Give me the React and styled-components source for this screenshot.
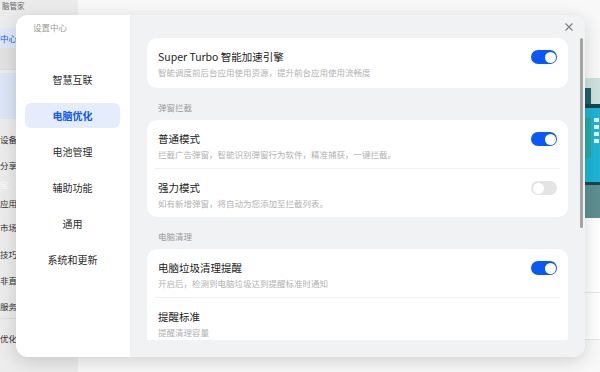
import React from "react";
import styled, { createGlobalStyle } from "styled-components";

const GlobalStyle = createGlobalStyle`
  html, body {
    margin: 0;
    padding: 0;
    background: #f8f8f8;
  }
  body {
    font-family: "Noto Sans CJK SC", "Noto Sans", sans-serif;
  }
  * {
    box-sizing: border-box;
  }
`;

const Page = styled.div`
  position: relative;
  width: 600px;
  height: 372px;
  overflow: hidden;
  display: flex;
  background: #f8f8f8;
`;

/* ---------- app behind the dialog ---------- */

const AppSidebar = styled.div`
  width: 78px;
  height: 100%;
  background: #ececec;
  display: flex;
  flex-direction: column;
  font-size: 8.5px;
  color: #333;
`;

const AppBrand = styled.div`
  height: 28px;
  padding-top: 1px;
  line-height: 9px;
  font-size: 7.5px;
  color: #666;
  padding-left: 2px;
`;

const AppNavItem = styled.div`
  height: ${p => p.h || 26}px;
  display: flex;
  align-items: center;
  white-space: nowrap;
  color: ${p => (p.faint ? "#fafafa" : p.active ? "#1a5ff0" : "#333")};
  background: ${p => (p.active ? "#dfe8fa" : p.shade ? "#e2e2e2" : "transparent")};
  border-bottom: ${p => (p.divider ? "1px solid #dcdcdc" : "none")};
`;

const AppBanner = styled.div`
  height: 46px;
  margin: 3px 0 6px;
  background: #dde6f6;
`;

const AppMain = styled.div`
  flex: 1;
  display: grid;
  grid-template-columns: 507px 1fr;
`;

const AppRight = styled.div`
  padding-top: 78px;
  display: flex;
  flex-direction: column;
`;

const Promo = styled.div`
  height: 140px;
  background: #cfe3de;
  svg {
    display: block;
  }
`;

const AppRow = styled.div`
  height: ${p => p.h}px;
  background: #fff;
  border-bottom: 1px solid #e6e6e6;
`;

/* ---------- dialog ---------- */

const Dialog = styled.div`
  position: absolute;
  left: 16px;
  top: 15px;
  width: 569px;
  height: 342px;
  border-radius: 12px;
  overflow: hidden;
  display: flex;
  box-shadow: 0 4px 18px rgba(0, 0, 0, 0.16);
`;

const Nav = styled.div`
  width: 114px;
  background: #fff;
  display: flex;
  flex-direction: column;
`;

const NavTitle = styled.div`
  padding: 6px 0 0 17px;
  line-height: 12px;
  font-size: 8.5px;
  color: #9a9a9a;
`;

const NavList = styled.div`
  margin-top: 34px;
  display: flex;
  flex-direction: column;
  gap: 11px;
  padding: 0 10px 0 9px;
`;

const NavItem = styled.div`
  height: 25px;
  border-radius: 6px;
  display: flex;
  align-items: center;
  justify-content: center;
  font-size: 10px;
  font-weight: ${p => (p.active ? 700 : 400)};
  color: ${p => (p.active ? "#0a59f7" : "#2b2b2b")};
  background: ${p => (p.active ? "#e5edfd" : "transparent")};
`;

const Content = styled.div`
  position: relative;
  flex: 1;
  background: #f1f2f4;
  padding-bottom: 17px;
`;

const Scroller = styled.div`
  height: 325px;
  overflow: hidden;
  padding: 23px 17px 0;
`;

const CloseButton = styled.button`
  position: absolute;
  top: 7px;
  right: 11px;
  width: 10px;
  height: 10px;
  padding: 0;
  border: none;
  background: none;
  display: flex;
  svg {
    display: block;
  }
`;

const ScrollThumb = styled.div`
  position: absolute;
  right: 2px;
  top: 23px;
  width: 3px;
  height: 190px;
  border-radius: 2px;
  background: #a3a3a3;
`;

const Card = styled.div`
  background: #fff;
  border-radius: 10px;
  padding: 0 11px;
`;

const Row = styled.div`
  height: ${p => p.h || 48}px;
  padding-top: 12px;
  display: flex;
  align-items: flex-start;
  justify-content: space-between;
`;

const RowText = styled.div`
  display: flex;
  flex-direction: column;
  gap: 2px;
`;

const RowTitle = styled.div`
  font-size: 10.5px;
  line-height: 14px;
  color: #222;
  white-space: nowrap;
`;

const RowDesc = styled.div`
  font-size: 8.5px;
  line-height: 12px;
  color: #b2b2b2;
  white-space: nowrap;
`;

const Divider = styled.div`
  height: 1px;
  margin: 0 -3px;
  background: #efefef;
`;

const SectionLabel = styled.div`
  height: 32px;
  padding: 13px 0 0 11px;
  line-height: 12px;
  font-size: 8.5px;
  color: #9c9c9c;
`;

const Track = styled.div`
  width: 26px;
  height: 14px;
  border-radius: 7px;
  padding: 1.5px;
  display: flex;
  justify-content: ${p => (p.on ? "flex-end" : "flex-start")};
  background: ${p => (p.on ? "#0a59f7" : "#e4e4e4")};
  flex-shrink: 0;
`;

const Knob = styled.div`
  width: 11px;
  height: 11px;
  border-radius: 50%;
  background: #fff;
`;

const Toggle = ({ on }) => (
  <Track on={on ? 1 : 0}>
    <Knob />
  </Track>
);

const SettingRow = ({ title, desc, on, h }) => (
  <Row h={h}>
    <RowText>
      <RowTitle>{title}</RowTitle>
      <RowDesc>{desc}</RowDesc>
    </RowText>
    {on !== undefined && <Toggle on={on} />}
  </Row>
);

const navItems = ["智慧互联", "电脑优化", "电池管理", "辅助功能", "通用", "系统和更新"];

const PromoArt = () => (
  <svg width="15" height="140" viewBox="0 0 15 140">
    <rect x="0" y="0" width="15" height="140" fill="#cde2dc" />
    <rect x="0" y="10" width="6" height="18" fill="#1f5f66" />
    <rect x="0" y="26" width="15" height="4" fill="#16474d" />
    <rect x="0" y="30" width="15" height="76" fill="#1fb3d6" />
    <rect x="0" y="40" width="6" height="40" fill="#2aa7a0" />
    <rect x="9" y="40" width="5" height="4" fill="#e8f3fb" />
    <rect x="9" y="47" width="5" height="4" fill="#e8f3fb" />
    <rect x="9" y="54" width="5" height="4" fill="#e8f3fb" />
    <rect x="9" y="61" width="5" height="4" fill="#e8f3fb" />
    <rect x="0" y="104" width="15" height="3" fill="#16474d" />
    <rect x="0" y="107" width="15" height="33" fill="#5f8f90" />
  </svg>
);

const App = () => (
  <>
    <GlobalStyle />
    <Page>
      <AppSidebar>
        <AppBrand>脑管家</AppBrand>
        <AppNavItem h={20} active>
          中心 〉
        </AppNavItem>
        <AppNavItem h={22} shade divider />
        <AppBanner />
        <AppNavItem h={28}>设备</AppNavItem>
        <AppNavItem h={24}>分享</AppNavItem>
        <AppNavItem h={14} faint>
          宝.
        </AppNavItem>
        <AppNavItem h={24}>应用</AppNavItem>
        <AppNavItem h={24}>市场</AppNavItem>
        <AppNavItem h={2} />
        <AppNavItem h={26}>技巧</AppNavItem>
        <AppNavItem h={26}>非直</AppNavItem>
        <AppNavItem h={26} divider>
          服务
        </AppNavItem>
        <AppNavItem h={38}>优化</AppNavItem>
      </AppSidebar>
      <AppMain>
        <div />
        <AppRight>
          <Promo>
            <PromoArt />
          </Promo>
          <AppRow h={75} />
          <AppRow h={47} />
        </AppRight>
      </AppMain>

      <Dialog>
        <Nav>
          <NavTitle>设置中心</NavTitle>
          <NavList>
            {navItems.map(item => (
              <NavItem key={item} active={item === "电脑优化" ? 1 : 0}>
                {item}
              </NavItem>
            ))}
          </NavList>
        </Nav>
        <Content>
          <CloseButton aria-label="关闭">
            <svg width="10" height="10" viewBox="0 0 10 10">
              <path d="M1.5 1.5 L8.5 8.5 M8.5 1.5 L1.5 8.5" stroke="#7d7d7d" strokeWidth="1.1" />
            </svg>
          </CloseButton>
          <ScrollThumb />
          <Scroller>
            <Card>
              <SettingRow
                h={50}
                title="Super Turbo 智能加速引擎"
                desc="智能调度前后台应用使用资源，提升前台应用使用流畅度"
                on
              />
            </Card>
            <SectionLabel>弹窗拦截</SectionLabel>
            <Card>
              <SettingRow
                title="普通模式"
                desc="拦截广告弹窗，智能识别弹窗行为软件，精准捕获，一键拦截。"
                on
              />
              <Divider />
              <SettingRow
                title="强力模式"
                desc="如有新增弹窗，将自动为您添加至拦截列表。"
                on={false}
              />
            </Card>
            <SectionLabel>电脑清理</SectionLabel>
            <Card>
              <SettingRow
                title="电脑垃圾清理提醒"
                desc="开启后，检测到电脑垃圾达到提醒标准时通知"
                on
              />
              <Divider />
              <SettingRow title="提醒标准" desc="提醒清理容量" />
            </Card>
          </Scroller>
        </Content>
      </Dialog>
    </Page>
  </>
);

export default App;
